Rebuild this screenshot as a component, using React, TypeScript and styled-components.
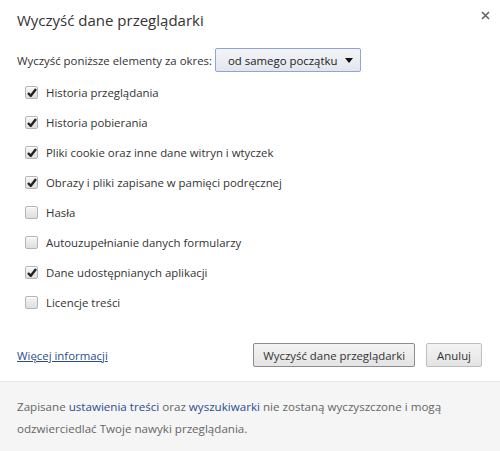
import React from "react";
import styled, { createGlobalStyle } from "styled-components";

const Global = createGlobalStyle`
  html, body { margin: 0; padding: 0; background: #fff; }
  body { font-family: "Open Sans", "Noto Sans", sans-serif; }
`;

const Dialog = styled.div`
  width: 500px;
  height: 451px;
  display: flex;
  flex-direction: column;
  background: #fff;
  color: #333;
  font-size: 11.4px;
  box-sizing: border-box;
  position: relative;
`;

const Body = styled.div`
  flex: 1;
  padding: 9px 18px 0 17px;
  display: flex;
  flex-direction: column;
`;

const Title = styled.h1`
  margin: 0;
  font-weight: normal;
  font-size: 15px;
  line-height: 22px;
  color: #333;
`;

const Close = styled.button`
  position: absolute;
  top: 9px;
  right: 9px;
  width: 12px;
  height: 12px;
  padding: 0;
  border: none;
  background: none;
  display: flex;
  align-items: center;
  justify-content: center;
`;

const PeriodRow = styled.div`
  display: flex;
  align-items: center;
  gap: 3px;
  margin-top: 17px;
  height: 24px;
`;

const Select = styled.div`
  height: 24px;
  width: 146px;
  box-sizing: border-box;
  border: 1px solid #8ea6cf;
  border-radius: 2px;
  background: linear-gradient(#f3f5f8, #e2e6ec);
  display: flex;
  align-items: center;
  justify-content: space-between;
  padding: 0 7px 0 12px;
  color: #222;
`;

const Arrow = styled.span`
  width: 0;
  height: 0;
  border-left: 4.5px solid transparent;
  border-right: 4.5px solid transparent;
  border-top: 5px solid #111;
`;

const List = styled.div`
  display: flex;
  flex-direction: column;
  margin-top: 5px;
`;

const Row = styled.label`
  display: flex;
  align-items: center;
  height: 30px;
  padding-left: 8px;
  gap: 8px;
`;

const Box = styled.span<{ $on: boolean }>`
  width: 13px;
  height: 13px;
  box-sizing: border-box;
  border: 1px solid #b4b4b4;
  border-radius: 2px;
  background: linear-gradient(#f6f6f6, #dedede);
  box-shadow: inset 0 1px 0 #fff;
  display: flex;
  align-items: center;
  justify-content: center;
  flex: none;
`;

const Footer = styled.div`
  display: flex;
  align-items: center;
  margin-top: 26px;
  height: 24px;
`;

const MoreLink = styled.a`
  color: #2a4d8f;
  text-decoration: underline;
  flex: 1;
`;

const Button = styled.button<{ $primary?: boolean }>`
  height: 24px;
  box-sizing: border-box;
  font-family: inherit;
  font-size: 11.4px;
  color: #333;
  border: 1px solid ${(p) => (p.$primary ? "#8c8c8c" : "#bdbdbd")};
  border-radius: 2px;
  background: linear-gradient(#f4f4f4, #e4e4e4);
  padding: 0 ${(p) => (p.$primary ? 9 : 10)}px;
  margin-left: 11px;
`;

const Note = styled.div`
  height: 70px;
  border-top: 1px solid #e6e6e6;
  background: #f5f5f5;
  color: #666;
  padding: 14px 17px 0 17px;
  line-height: 22px;
  box-sizing: border-box;
  font-size: 11.6px;
`;

const NoteLink = styled.a`
  color: #2a4d8f;
  text-decoration: none;
`;

const items: [string, boolean][] = [
  ["Historia przeglądania", true],
  ["Historia pobierania", true],
  ["Pliki cookie oraz inne dane witryn i wtyczek", true],
  ["Obrazy i pliki zapisane w pamięci podręcznej", true],
  ["Hasła", false],
  ["Autouzupełnianie danych formularzy", false],
  ["Dane udostępnianych aplikacji", true],
  ["Licencje treści", false],
];

const Check = () => (
  <svg width="10" height="9" viewBox="0 0 10 9">
    <path d="M1 5 L3.8 7.8 L9 1" fill="none" stroke="#222" strokeWidth="2.4" strokeLinejoin="round" />
  </svg>
);

export default function App() {
  return (
    <Dialog>
      <Global />
      <Close aria-label="Zamknij">
        <svg width="9" height="9" viewBox="0 0 9 9">
          <path d="M1 1 L8 8 M8 1 L1 8" stroke="#666" strokeWidth="1.7" />
        </svg>
      </Close>
      <Body>
        <Title>Wyczyść dane przeglądarki</Title>
        <PeriodRow>
          <span>Wyczyść poniższe elementy za okres:</span>
          <Select>
            <span>od samego początku</span>
            <Arrow />
          </Select>
        </PeriodRow>
        <List>
          {items.map(([t, on]) => (
            <Row key={t}>
              <Box $on={on}>{on && <Check />}</Box>
              <span>{t}</span>
            </Row>
          ))}
        </List>
        <Footer>
          <MoreLink href="#">Więcej informacji</MoreLink>
          <Button $primary>Wyczyść dane przeglądarki</Button>
          <Button>Anuluj</Button>
        </Footer>
      </Body>
      <Note>
        Zapisane <NoteLink href="#">ustawienia treści</NoteLink> oraz{" "}
        <NoteLink href="#">wyszukiwarki</NoteLink> nie zostaną wyczyszczone i mogą
        <br />
        odzwierciedlać Twoje nawyki przeglądania.
      </Note>
    </Dialog>
  );
}
